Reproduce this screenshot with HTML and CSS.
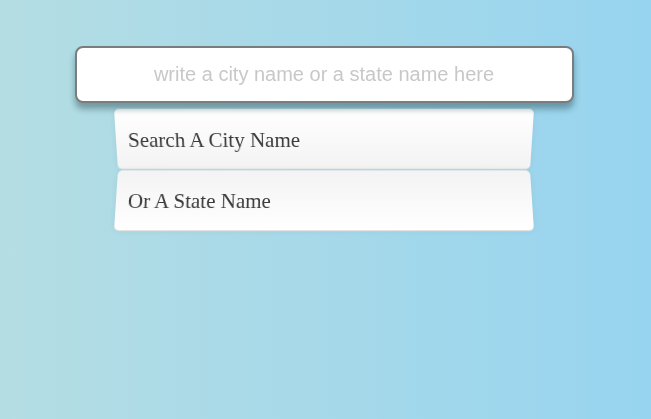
FILE: index.html
```html
<!DOCTYPE html>
<html>
<head>
<meta charset="utf-8">
<link rel="stylesheet" href="styles.css">
</head>
<body>
<form class="search-form">
  <input type="text" class="search" placeholder="write a city name or a state name here">
  <ul class="suggestions">
    <li class="item odd">Search A City Name</li>
    <li class="item even">Or A State Name</li>
  </ul>
</form>
</body>
</html>
```
FILE: styles.css
```css
html, body {
  margin: 0;
  padding: 0;
  height: 100%;
}
body {
  background: linear-gradient(to right, #b4dde3 0%, #97d4ef 100%);
  overflow: hidden;
}
.search-form {
  width: 416px;
  margin: 46px auto 0;
  position: relative;
  left: -2px;
}
.search {
  display: block;
  box-sizing: border-box;
  width: 499px;
  height: 57px;
  margin: 0 0 0 -41px;
  position: relative;
  z-index: 2;
  border: 2px solid #7a7d7e;
  border-radius: 8px;
  background: #fff;
  text-align: center;
  font-family: "Liberation Sans", Arial, sans-serif;
  font-size: 20px;
  outline: 0;
  box-shadow: 0 6px 6px rgba(40, 70, 80, 0.45);
}
.search::placeholder {
  color: #c8c8c8;
}
.suggestions {
  list-style: none;
  margin: 6px 0 0;
  padding: 0;
}
.item {
  box-sizing: border-box;
  height: 61px;
  display: flex;
  align-items: center;
  padding: 2px 0 0 12px;
  border-bottom: 1px solid #d8d8d8;
  border-radius: 5px;
  font-family: "Liberation Serif", "Times New Roman", serif;
  font-size: 21px;
  color: #3a3a3a;
  box-shadow: 0 0 6px rgba(0, 0, 0, 0.06);
}
.odd {
  transform: perspective(100px) rotateX(-1.8deg);
  background: linear-gradient(to bottom, #ffffff 0%, #f3f3f3 100%);
}
.even {
  transform: perspective(100px) rotateX(1.8deg);
  background: linear-gradient(to bottom, #f3f3f3 0%, #ffffff 100%);
}
```
